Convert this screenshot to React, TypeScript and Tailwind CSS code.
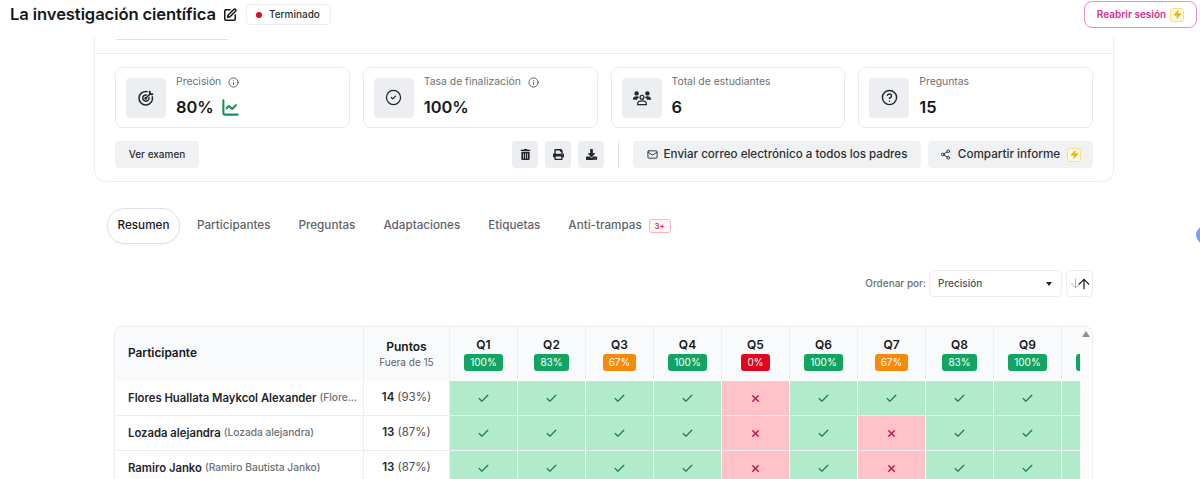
import { ChartLine, Check, Info, Mail, Share2, X, Zap, CircleCheck, CircleHelp, SquarePen, ArrowDown, ArrowUp } from "lucide-react"
import { FaPrint, FaTrashAlt, FaDownload } from "react-icons/fa"
import type { ReactNode } from "react"

const questions = [
  { q: "Q1", pct: "100%", color: "bg-[#12a561]" },
  { q: "Q2", pct: "83%", color: "bg-[#12a561]" },
  { q: "Q3", pct: "67%", color: "bg-[#f5890a]" },
  { q: "Q4", pct: "100%", color: "bg-[#12a561]" },
  { q: "Q5", pct: "0%", color: "bg-[#e0061f]" },
  { q: "Q6", pct: "100%", color: "bg-[#12a561]" },
  { q: "Q7", pct: "67%", color: "bg-[#f5890a]" },
  { q: "Q8", pct: "83%", color: "bg-[#12a561]" },
  { q: "Q9", pct: "100%", color: "bg-[#12a561]" },
  { q: "Q10", pct: "100%", color: "bg-[#12a561]" },
]

const rows = [
  { name: "Flores Huallata Maykcol Alexander", alias: "(Flore...", score: "14", pct: "(93%)", wrong: ["Q5"] },
  { name: "Lozada alejandra", alias: "(Lozada alejandra)", score: "13", pct: "(87%)", wrong: ["Q5", "Q7"] },
  { name: "Ramiro Janko", alias: "(Ramiro Bautista Janko)", score: "13", pct: "(87%)", wrong: ["Q5", "Q7"] },
]

function TargetIcon() {
  return (
    <svg viewBox="0 0 24 24" className="h-[18px] w-[18px]" fill="none" stroke="#23262b" strokeWidth="2" strokeLinecap="round">
      <path d="M20.5 10.5a9 9 0 1 1-7-7" />
      <path d="M16 11.5a4.2 4.2 0 1 1-3.5-3.5" />
      <circle cx="11.5" cy="12.5" r="0.8" fill="#23262b" />
      <path d="M12 12l6-6" />
      <path d="M17 3.5l.3 3.2 3.2.3" strokeWidth="2.6" />
    </svg>
  )
}

// two filled heads at the sides, outlined person in the middle
function PeopleIcon() {
  return (
    <svg viewBox="0 0 24 24" className="h-[20px] w-[20px]" fill="#23262b" stroke="none">
      <circle cx="5.5" cy="6.5" r="2.6" />
      <circle cx="18.5" cy="6.5" r="2.6" />
      <path d="M1 14c0-2.6 2-4 4.5-4 1.3 0 2.4.4 3.2 1-1.4.7-2.4 1.700-2.800 3z" />
      <path d="M23 14c0-2.600-2-4-4.500-4-1.300 0-2.400.4-3.200 1 1.400.7 2.400 1.700 2.800 3z" />
      <circle cx="12" cy="11" r="2.300" fill="none" stroke="#23262b" strokeWidth="1.500" />
      <path d="M6.800 20v-1c0-2.300 2.200-3.500 5.200-3.500s5.200 1.200 5.200 3.500v1z" fill="none" stroke="#23262b" strokeWidth="1.500" strokeLinejoin="round" />
    </svg>
  )
}

function LightningBadge() {
  return (
    <span className="flex h-[14px] w-[14px] items-center justify-center rounded-[3px] border border-[#f7e08a] bg-[#fff9e0]">
      <Zap className="h-[9px] w-[9px] fill-[#eab308] text-[#eab308]" />
    </span>
  )
}

function Stat({ icon, label, value, info, extra }: { icon: ReactNode; label: string; value: string; info?: boolean; extra?: ReactNode }) {
  return (
    <div className="flex h-[61px] flex-1 items-center gap-[10px] rounded-lg border border-[#e9ebee] bg-white px-[10px]">
      <div className="flex h-10 w-10 items-center justify-center rounded bg-[#eceef1]">{icon}</div>
      <div className="pb-[2px]">
        <div className="flex items-center gap-[7px] text-[10.4px] leading-[14px] text-[#6b7076]">
          {label}
          {info && <Info className="h-[11px] w-[11px] text-[#555a60]" />}
        </div>
        <div className="mt-[7px] flex items-center gap-[7px] text-[16.4px] font-semibold leading-[22px] text-[#15181c]">
          {value}
          {extra}
        </div>
      </div>
    </div>
  )
}

function IconButton({ children }: { children: ReactNode }) {
  return <button className="flex h-[27px] w-[26px] items-center justify-center rounded bg-[#eceef1] text-[#23262b]">{children}</button>
}

export default function App() {
  const tabs = ["Participantes", "Preguntas", "Adaptaciones", "Etiquetas", "Anti-trampas"]

  return (
    <div className="relative h-[479px] w-[1200px] overflow-hidden bg-white font-['Inter','Liberation_Sans',sans-serif] text-[#23262b]">
      <header className="flex h-[29px] items-center pr-[3px] pl-[10px]">
        <h1 className="text-[16.6px] font-semibold tracking-[-0.1px] text-[#15181c]">La investigación científica</h1>
        <SquarePen className="ml-[7px] h-[14px] w-[14px] text-[#15181c]" strokeWidth={2.6} />
        <div className="ml-[9px] flex h-[21px] w-[85px] items-center gap-[7px] rounded border border-[#eceef1] pl-[9px] text-[10px] font-medium text-[#2b2f33]">
          <span className="h-[6px] w-[6px] rounded-full bg-[#e0061f]" />
          Terminado
        </div>
        <button className="ml-auto flex h-[27px] w-[113px] items-center justify-center gap-[4px] rounded-lg border border-[#e88ec4] text-[10px] font-semibold text-[#d92d8f]">
          Reabrir sesión
          <LightningBadge />
        </button>
      </header>

      <section className="mt-[9px] ml-[94px] h-[144px] w-[1020px] rounded-b-xl border-x border-b border-[#eceef1]">
        <div className="h-[16px] pl-[21px]">
          <div className="h-[1px] w-[112px] translate-y-[1px] bg-[#cfeee3]" />
        </div>
        <div className="mt-[-1px] border-t border-[#e9ebee] px-[20px] pt-[13px]">
          <div className="flex gap-[13px]">
            <Stat
              icon={<TargetIcon />}
              label="Precisión"
              value="80%"
              info
              extra={<ChartLine className="h-[19px] w-[19px] text-[#15905a]" strokeWidth={2.6} />}
            />
            <Stat icon={<CircleCheck className="h-[17px] w-[17px]" strokeWidth={1.8} />} label="Tasa de finalización" value="100%" info />
            <Stat icon={<PeopleIcon />} label="Total de estudiantes" value="6" />
            <Stat icon={<CircleHelp className="h-[17px] w-[17px]" strokeWidth={2} />} label="Preguntas" value="15" />
          </div>
          <div className="mt-[13px] flex h-[27px] items-center">
            <button className="h-[27px] w-[84px] rounded bg-[#f0f1f2] text-[10px] font-medium text-[#2b2f33]">Ver examen</button>
            <div className="ml-auto flex gap-[7px]">
              <IconButton><FaTrashAlt className="h-[11px] w-[11px]" /></IconButton>
              <IconButton><FaPrint className="h-[11px] w-[11px]" /></IconButton>
              <IconButton><FaDownload className="h-[11px] w-[11px]" /></IconButton>
            </div>
            <div className="mx-[14px] h-[27px] w-px bg-[#e3e5e8]" />
            <button className="flex h-[27px] w-[288px] items-center justify-center gap-[6px] rounded bg-[#f0f1f2] text-[11.6px] font-medium text-[#2b2f33]">
              <Mail className="h-[11px] w-[11px]" />
              Enviar correo electrónico a todos los padres
            </button>
            <button className="ml-[7px] flex h-[27px] w-[165px] items-center justify-center gap-[7px] rounded bg-[#f0f1f2] text-[11.7px] font-medium text-[#2b2f33]">
              <Share2 className="h-[11px] w-[11px]" />
              Compartir informe
              <LightningBadge />
            </button>
          </div>
        </div>
      </section>

      <nav className="mt-[26px] ml-[107px] flex h-[36px] items-center text-[11.7px] font-medium text-[#5f646a]">
        <button className="h-[36px] w-[73px] rounded-[18px] border border-[#dfe1e4] text-[#15181c] shadow-[0_1px_2px_rgba(0,0,0,0.05)]">Resumen</button>
        <div className="ml-[17px] flex items-center gap-[28px]">
          {tabs.map((t) => (
            <span key={t}>{t}</span>
          ))}
        </div>
        <span className="ml-[7px] flex h-[14px] w-[22px] items-center justify-center rounded-[3px] border border-[#f5b5bb] bg-[#fff5f5] text-[8px] text-[#d0142c]">3+</span>
      </nav>

      <div className="mt-[26px] mr-[107px] flex h-[27px] items-center justify-end text-[10px] font-medium text-[#6b7076]">
        <span className="mr-[3px]">Ordenar por:</span>
        <div className="flex h-[27px] w-[133px] items-center justify-between rounded border border-[#eceef1] pr-[9px] pl-[8px] text-[#4c5157]">
          Precisión
          <span className="h-0 w-0 border-x-[3.5px] border-t-[4px] border-x-transparent border-t-[#23262b]" />
        </div>
        <button className="ml-[4px] flex h-[27px] w-[27px] items-center justify-center rounded border border-[#eceef1]">
          <ArrowDown className="-mr-[5px] h-[15px] w-[15px] text-[#9a9ea3]" strokeWidth={1.3} />
          <ArrowUp className="-ml-[2px] h-[16px] w-[16px] text-[#23262b]" strokeWidth={1.9} />
        </button>
      </div>

      <div className="mt-[29px] ml-[114px] flex w-[979px] overflow-hidden rounded-t-lg border-x border-t border-[#eceef1]">
        <div className="w-[965px] shrink-0 overflow-hidden">
          <div className="flex h-[54px] w-max bg-[#f9fafb] text-[#15181c]">
            <div className="flex w-[249px] items-center border-r border-[#eceef1] pl-[13px] text-[11.8px] font-semibold">Participante</div>
            <div className="flex w-[86px] flex-col items-center justify-center border-r border-[#eceef1]">
              <span className="text-[12px] font-semibold leading-[16px]">Puntos</span>
              <span className="text-[10px] leading-[14px] text-[#5f646a]">Fuera de 15</span>
            </div>
            {questions.map((h) => (
              <div key={h.q} className="flex w-[68px] flex-col items-center justify-center border-r border-[#eceef1]">
                <span className="text-[12px] font-semibold leading-[16px]">{h.q}</span>
                <span className={`${h.color} mt-[1px] rounded-[3px] px-[6px] text-[10px] leading-[17px] text-white`}>{h.pct}</span>
              </div>
            ))}
          </div>
          {rows.map((r) => (
            <div key={r.name} className="flex h-[35px] w-max border-b border-[#eceef1]">
              <div className="flex w-[249px] items-center gap-[3px] border-r border-[#eceef1] pl-[13px] whitespace-nowrap">
                <span className="text-[11.3px] font-semibold text-[#23262b]">{r.name}</span>
                <span className="text-[10.2px] font-medium text-[#6b7076]">{r.alias}</span>
              </div>
              <div className="flex w-[86px] items-center justify-center gap-[3px] border-r border-[#eceef1] text-[11.5px]">
                <span className="font-semibold">{r.score}</span>
                <span className="text-[#4c5157]">{r.pct}</span>
              </div>
              {questions.map((h) =>
                r.wrong.includes(h.q) ? (
                  <div key={h.q} className="flex w-[68px] items-center justify-center border-r border-white bg-[#ffc2c9]">
                    <X className="h-[11px] w-[11px] text-[#c2103a]" strokeWidth={3} />
                  </div>
                ) : (
                  <div key={h.q} className="flex w-[68px] items-center justify-center border-r border-white bg-[#b2ebcc]">
                    <Check className="h-[13px] w-[13px] text-[#1b7d58]" strokeWidth={2.2} />
                  </div>
                ),
              )}
            </div>
          ))}
        </div>
        <div className="flex flex-1 justify-center bg-[#fcfcfc] pt-[2px]">
          <span className="mt-[2px] h-0 w-0 border-x-[4px] border-b-[6px] border-x-transparent border-b-[#8f9296]" />
        </div>
      </div>

      <div className="absolute top-[226px] right-[-14px] h-[18px] w-[18px] rounded-full bg-[#7f9cf0]" />
    </div>
  )
}
